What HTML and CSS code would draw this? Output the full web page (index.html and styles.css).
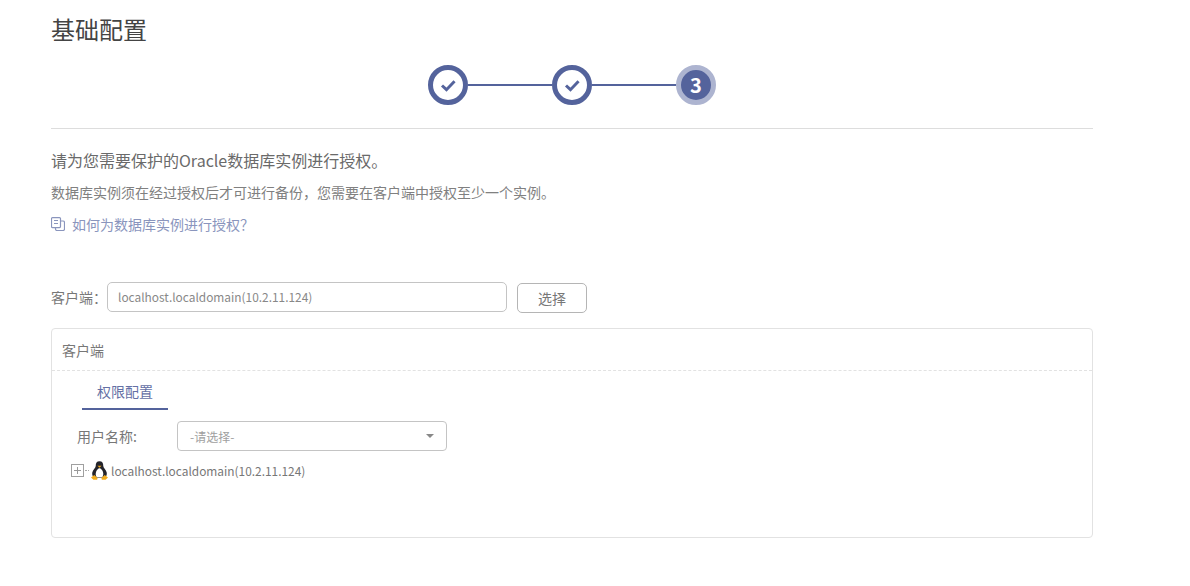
FILE: index.html
```html
<!DOCTYPE html>
<html lang="zh">
<head>
<meta charset="utf-8">
<title>基础配置</title>
<link rel="stylesheet" href="styles.css">
</head>
<body>
<main class="page">
  <h1 class="title">基础配置</h1>
  <div class="steps">
    <span class="step done"><svg viewBox="0 0 18 14" class="check"><path d="M2 7L6.800 11.500L15.500 2.500" fill="none" stroke="#54639c" stroke-width="3.200"/></svg></span>
    <span class="line"></span>
    <span class="step done"><svg viewBox="0 0 18 14" class="check"><path d="M2 7L6.800 11.500L15.500 2.500" fill="none" stroke="#54639c" stroke-width="3.200"/></svg></span>
    <span class="line"></span>
    <span class="step current">3</span>
  </div>
  <p class="lead">请为您需要保护的Oracle数据库实例进行授权。</p>
  <p class="note">数据库实例须在经过授权后才可进行备份，您需要在客户端中授权至少一个实例。</p>
  <a class="help" href="#">
    <svg class="help-icon" viewBox="0 0 14 14"><path d="M1.500.6h7a1 1 0 0 1 1 1v8a1 1 0 0 1-1 1h-7a1 1 0 0 1-1-1v-8a1 1 0 0 1 1-1zM3 3.500h4M3 6.500h4M4.500 10.500v1.500a1.500 1.500 0 0 0 1.500 1.500h6a1.500 1.500 0 0 0 1.500-1.500v-6.500a1.500 1.500 0 0 0-1.500-1.500h-2.500" fill="none" stroke="#8a95bd" stroke-width="1.200"/></svg>
    如何为数据库实例进行授权？
  </a>
  <div class="client-row">
    <label class="client-label">客户端：</label>
    <div class="input">localhost.localdomain(10.2.11.124)</div>
    <button class="btn" type="button">选择</button>
  </div>
  <section class="card">
    <header class="card-head">客户端</header>
    <div class="card-body">
      <div class="tabs"><span class="tab">权限配置</span></div>
      <div class="user-row">
        <label class="user-label">用户名称:</label>
        <div class="select"><span>-请选择-</span><i class="caret"></i></div>
      </div>
      <div class="tree-row">
        <span class="expander"></span>
        <span class="dots"></span>
        <svg class="tux" viewBox="0 0 18 20">
          <path d="M9 .3C6 .3 5 2.500 5 5.200 5 7 1.800 9.500 1.300 12.500c-.3 2.200.6 4.500 2.300 5.500h10.800c1.700-1 2.600-3.300 2.300-5.500C16.200 9.500 13 7 13 5.200 13 2.500 12 .3 9 .3z" fill="#23232a"/>
          <path d="M9 7.500C7.600 7.500 6.500 9 5.500 11 4.500 13.200 5 16.500 6.500 17.500h5c1.500-1 2-4.300 1-6.500C11.500 9 10.400 7.500 9 7.500z" fill="#fff"/>
          <path d="M6.800 5h4.400L9 7.200z" fill="#f0a81c"/>
          <path d="M0 17.500l3.500-2.800 3.500 3.300-.5 1.700H2.500zM18 17.500l-3.500-2.800-3.500 3.300.5 1.700h4z" fill="#f2ac1e"/>
        </svg>
        <span class="tree-text">localhost.localdomain(10.2.11.124)</span>
      </div>
    </div>
  </section>
</main>
</body>
</html>
```
FILE: styles.css
```css
* { box-sizing: border-box; }
html, body { margin: 0; padding: 0; background: #fff; }
body {
  font-family: "Noto Sans CJK SC", "Noto Sans", sans-serif;
  color: #777;
  font-size: 13px;
  height: 586px;
  overflow: hidden;
  text-spacing-trim: space-all;
}
.page { width: 1042px; margin-left: 51px; }
.title {
  margin: 0;
  padding-top: 11px;
  font-size: 24px;
  line-height: 36px;
  font-weight: 400;
  color: #444;
}
.steps {
  display: flex;
  align-items: center;
  justify-content: center;
  height: 82px;
  padding-bottom: 5px;
  border-bottom: 1px solid #ddd;
}
.step {
  flex: none;
  width: 40px;
  height: 40px;
  border-radius: 50%;
  display: flex;
  align-items: center;
  justify-content: center;
}
.step.done { border: 5px solid #54639c; background: #fff; }
.check { width: 17px; height: 13px; }
.step.current {
  background: #54639c;
  border: 5px solid #adb4d0;
  color: #fff;
  font-weight: 700;
  font-size: 20px;
  padding-bottom: 2px;
}
.line { flex: none; width: 84px; height: 2px; background: #54639c; }
.lead { margin: 0; padding-top: 20px; font-size: 16px; line-height: 22px; color: #6a6a6a; }
.note { margin: 0; padding-top: 11px; font-size: 14px; line-height: 20px; color: #808080; }
.help {
  display: flex;
  align-items: center;
  gap: 7px;
  margin-top: 11px;
  font-size: 14px;
  line-height: 22px;
  color: #8a95bd;
  text-decoration: none;
}
.help-icon { width: 14px; height: 14px; }
.client-row { display: flex; align-items: center; margin-top: 47px; height: 30px; }
.client-label { width: 56px; font-size: 14px; color: #777; }
.input {
  width: 400px;
  height: 30px;
  border: 1px solid #c4c4c4;
  border-radius: 5px;
  padding-left: 10px;
  line-height: 28px;
  font-size: 11.900px;
  color: #888;
}
.btn {
  margin-left: 10px;
  width: 70px;
  height: 30px;
  margin-top: 1px;
  border: 1px solid #b5b5b5;
  border-radius: 5px;
  background: #fff;
  font: inherit;
  font-size: 14px;
  color: #777;
  padding: 0;
}
.card {
  margin-top: 16px;
  height: 210px;
  border: 1px solid #e2e2e2;
  border-radius: 4px;
}
.card-head {
  height: 42px;
  line-height: 42px;
  padding-left: 10px;
  font-size: 14px;
  color: #777;
  border-bottom: 1px dashed #e2e2e2;
}
.tabs { padding-left: 30px; padding-top: 7px; }
.tab {
  display: block;
  width: 86px;
  height: 32px;
  line-height: 26px;
  text-align: center;
  font-size: 14px;
  color: #6470a5;
  border-bottom: 2px solid #54639c;
}
.user-row { display: flex; align-items: center; margin-top: 11px; padding-left: 25px; height: 30px; }
.user-label { width: 100px; font-size: 14px; color: #777; }
.select {
  width: 270px;
  height: 30px;
  border: 1px solid #c4c4c4;
  border-radius: 4px;
  padding: 0 12px;
  display: flex;
  align-items: center;
  justify-content: space-between;
  font-size: 12px;
  color: #a0a0a0;
}
.caret {
  width: 0;
  height: 0;
  border-left: 4px solid transparent;
  border-right: 4px solid transparent;
  border-top: 4px solid #888;
}
.tree-row { display: flex; align-items: center; height: 22px; margin-top: 8px; padding-left: 19px; }
.expander {
  width: 13px;
  height: 13px;
  border: 1px solid #a0a0a0;
  background:
    linear-gradient(#999, #999) center / 7px 1px no-repeat,
    linear-gradient(#999, #999) center / 1px 7px no-repeat;
}
.dots { width: 4px; height: 1px; margin-left: 1px; border-top: 1px dotted #aaa; }
.tux { width: 17px; height: 19px; margin-left: 2px; }
.tree-text { margin-left: 3px; font-size: 11.900px; color: #777; }
```
